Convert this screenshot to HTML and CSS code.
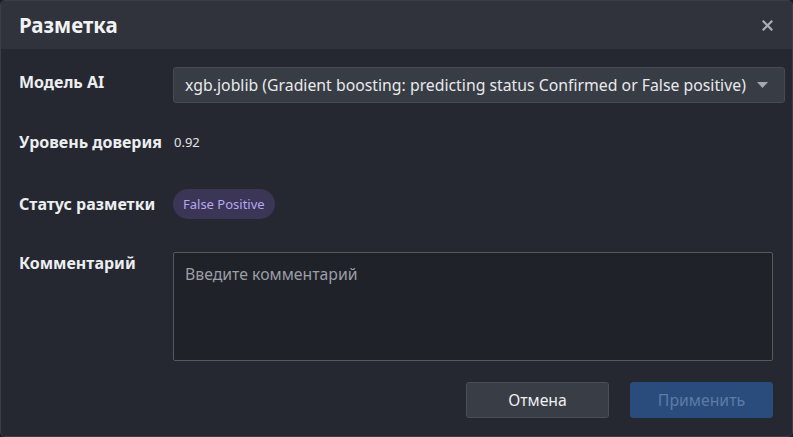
FILE: index.html
```html
<!DOCTYPE html>
<html lang="ru">

<head>
    <meta charset="UTF-8">
    <title>Разметка</title>
    <link rel="stylesheet" href="styles.css">
</head>

<body>
    <div class="dialog">
        <header class="dialog-header">
            <h1>Разметка</h1>
            <button class="close-btn" aria-label="Закрыть">
                <svg width="11" height="11" viewBox="0 0 11 11">
                    <path d="M1.5 1.5 L9.5 9.5 M9.5 1.5 L1.5 9.5" stroke="#a9adb5" stroke-width="2.2" stroke-linecap="square" />
                </svg>
            </button>
        </header>
        <main class="dialog-body">
            <div class="row row-model">
                <label class="field-label">Модель AI</label>
                <div class="select">
                    <span>xgb.joblib (Gradient boosting: predicting status Confirmed or False positive)</span>
                    <svg width="11" height="6" viewBox="0 0 11 6">
                        <path d="M0 0 H11 L5.5 6 Z" fill="#a4a8b0" />
                    </svg>
                </div>
            </div>
            <div class="row row-confidence">
                <label class="field-label">Уровень доверия</label>
                <span class="value">0.92</span>
            </div>
            <div class="row row-status">
                <label class="field-label">Статус разметки</label>
                <span class="badge">False Positive</span>
            </div>
            <div class="row row-comment">
                <label class="field-label">Комментарий</label>
                <textarea placeholder="Введите комментарий"></textarea>
            </div>
            <div class="actions">
                <button class="btn btn-cancel">Отмена</button>
                <button class="btn btn-apply" disabled>Применить</button>
            </div>
        </main>
    </div>
</body>

</html>
```

FILE: styles.css
```css
* {
    margin: 0;
    padding: 0;
    box-sizing: border-box;
}

html,
body {
    height: 100%;
}

body {
    background-color: #1c1e24;
    font-family: "Noto Sans", "Open Sans", sans-serif;
    color: #e6e7e9;
}

.dialog {
    height: 437px;
    width: 793px;
    border: 1px solid #3b3e45;
    border-radius: 5px;
    background-color: #252830;
    overflow: hidden;
    display: flex;
    flex-direction: column;
}

.dialog-header {
    height: 48px;
    flex-shrink: 0;
    background-color: #30333b;
    display: flex;
    align-items: center;
    justify-content: space-between;
    padding: 0 15px 0 18px;
}

.dialog-header h1 {
    font-size: 20.5px;
    font-weight: 700;
    color: #f1f2f3;
}

.close-btn {
    background: none;
    border: none;
    width: 20px;
    height: 20px;
    display: flex;
    align-items: center;
    justify-content: center;
    cursor: pointer;
}

.dialog-body {
    flex: 1;
    padding: 18px 19px 0 18px;
    display: flex;
    flex-direction: column;
}

.row {
    display: flex;
    align-items: center;
}

.field-label {
    width: 154px;
    flex-shrink: 0;
    font-size: 16px;
    font-weight: 700;
    color: #eceef0;
}

.select {
    width: 612px;
    flex-shrink: 0;
    height: 36px;
    background-color: #383c45;
    border: 1px solid #464a53;
    border-radius: 3px;
    display: flex;
    align-items: center;
    justify-content: space-between;
    padding: 0 16px 0 11px;
    font-size: 15.8px;
    color: #e8e9eb;
    white-space: nowrap;
}

.row-model .field-label {
    align-self: flex-start;
    padding-top: 4px;
}

.row-confidence {
    margin-top: 28px;
}

.value {
    font-size: 13px;
    color: #e3e4e6;
    margin-left: 1px;
}

.row-status {
    margin-top: 36px;
}

.badge {
    display: inline-block;
    background-color: #3b3656;
    color: #b7a6f1;
    font-size: 13px;
    border-radius: 15px;
    padding: 6px 10px;
}

.row-comment {
    margin-top: 33px;
    align-items: flex-start;
}

textarea {
    width: 601px;
    height: 109px;
    background-color: #1f2229;
    border: 1px solid #55585e;
    border-radius: 2px;
    padding: 10px 11px;
    font-family: inherit;
    font-size: 15.8px;
    color: #e6e7e9;
    resize: none;
    outline: none;
}

textarea::placeholder {
    color: #9b9ea4;
}

.actions {
    display: flex;
    justify-content: flex-end;
    gap: 21px;
    margin-top: 21px;
}

.btn {
    width: 143px;
    height: 36px;
    border-radius: 3px;
    font-family: inherit;
    font-size: 15.8px;
    cursor: pointer;
}

.btn-cancel {
    background-color: #393d46;
    border: 1px solid #4a4e57;
    color: #eeeff1;
}

.btn-apply {
    background-color: #2a4c7d;
    border: 1px solid #2a4c7d;
    color: #5d7ba5;
    cursor: default;
}
```
